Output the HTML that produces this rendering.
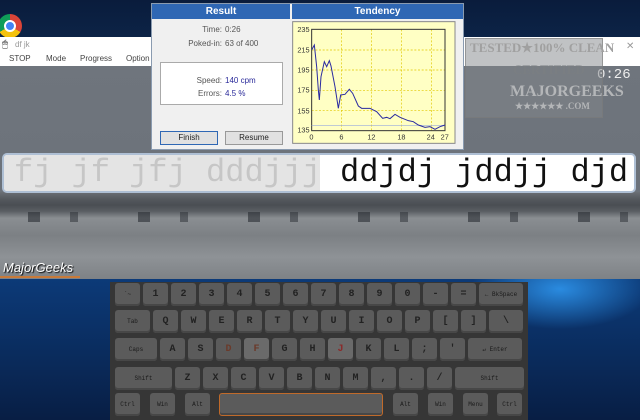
<!DOCTYPE html>
<html><head><meta charset="utf-8"><style>
*{margin:0;padding:0;box-sizing:border-box}
body{width:640px;height:420px;overflow:hidden;position:relative;background:#08193a;font-family:"Liberation Sans",sans-serif}
.abs{position:absolute}
#desk{left:0;top:0;width:640px;height:40px;background:linear-gradient(180deg,#0a1c3c,#0c2447)}
#bot{left:0;top:279px;width:640px;height:141px;background:radial-gradient(ellipse 90px 40px at 560px 10px,#2a8be0,transparent),linear-gradient(180deg,#0c3a78,#0a2a5a 60%,#081e44)}
#white{left:0;top:37px;width:640px;height:29px;background:#fff}
#app{left:0;top:66px;width:640px;height:213px;background:linear-gradient(180deg,#6f757d 0,#6c727a 60%,#7a7f85 100%)}
#land{left:0;top:192px;width:640px;height:87px;background:linear-gradient(180deg,#6a6f75 0,#55595e 8%,#4a4e53 15%,#5a5e63 22%,#8a8e92 30%,#7c8084 50%,#8e9296 75%,#7e8286 100%)}
.menu{top:54px;font-size:8px;color:#444}
#tbar{left:2px;top:153px;width:634px;height:40px;border:2px solid #aebfd4;border-radius:5px;background:#fff;overflow:hidden}
#tl{left:0;top:0;width:316px;height:36px;background:#e4e4e4}
.mono{font-family:"Liberation Mono",monospace;font-size:32px;top:-1px;white-space:pre}
#dlg{left:151px;top:3px;width:313px;height:147px;background:#f0f0f0;border:1px solid #8a9bb0}
.tt{top:0;height:15px;background:#2f67b4;color:#fff;font-size:10px;font-weight:bold;text-align:center;line-height:15px}
.lbl{font-size:8px;color:#555;text-align:right;width:60px}
.val{font-size:8px;color:#555}
.btn{font-size:8px;height:14px;border:1px solid #999;background:#e1e1e1;text-align:center;line-height:12px;color:#222}
#kb{left:110px;top:282px;width:418px;height:138px;background:#363636}
.row{position:absolute;left:5px;width:408px;display:flex;gap:3px}
.k{height:23px;background:#5b5b5b;border-radius:3px;box-shadow:inset 0 -2px 0 #474747;color:#222;font-family:"Liberation Mono",monospace;font-weight:bold;font-size:10px;display:flex;align-items:center;justify-content:center;flex:none}
.s{font-size:6px;font-weight:normal;color:#1a1a1a}
</style></head><body>
<div id="desk" class="abs"></div>
<div id="bot" class="abs"></div>
<div class="abs" style="left:-2px;top:14px;width:24px;height:24px;border-radius:50%;background:conic-gradient(#db4437 0 120deg,#f4c20d 0 240deg,#0f9d58 0)"></div>
<div class="abs" style="left:4px;top:20px;width:12px;height:12px;border-radius:50%;background:#4285f4;border:2px solid #fff"></div>
<div id="white" class="abs"></div>
<div class="abs" style="left:2px;top:39px;font-size:10px;color:#333">&#x1F5B1;</div>
<div class="abs" style="left:15px;top:40px;font-size:8px;color:#999">df jk</div>
<div class="abs menu" style="left:9px">STOP</div>
<div class="abs menu" style="left:46px">Mode</div>
<div class="abs menu" style="left:80px">Progress</div>
<div class="abs menu" style="left:126px">Option</div>
<div class="abs" style="left:626px;top:41px;font-size:10px;color:#999">✕</div>
<div id="app" class="abs"></div>
<div id="land" class="abs"></div>
<div class="abs" style="left:0;top:212px;width:640px;height:10px;background:repeating-linear-gradient(90deg,transparent 0 28px,rgba(40,44,50,.6) 28px 40px,transparent 40px 70px,rgba(40,44,50,.5) 70px 78px,transparent 78px 110px)"></div>
<div class="abs" style="left:597px;top:67px;font-family:'Liberation Mono',monospace;font-size:14px;color:#eee">0:26</div>
<div class="abs" style="left:3px;top:260px;font-size:13px;color:#fff;font-style:italic;text-shadow:1px 1px 1px #000">MajorGeeks</div>
<div class="abs" style="left:0;top:276px;width:80px;height:2px;background:#c87a3a"></div>
<div id="tbar" class="abs"><div id="tl" class="abs"></div>
<div class="abs mono" style="left:10px;color:#c6c6c6">fj jf jfj dddjjj</div>
<div class="abs mono" style="left:336px;color:#111">ddjdj jddjj djd</div></div>
<div class="abs" style="left:465px;top:38px;width:138px;height:80px;background:rgba(130,134,138,.5);border:1px solid rgba(120,120,120,.6)"></div>
<div class="abs" style="left:470px;top:40px;font-family:'Liberation Serif',serif;font-weight:bold;font-size:13px;color:#a0a0a0">TESTED★100% CLEAN</div>
<div class="abs" style="left:513px;top:62px;font-family:'Liberation Serif',serif;font-weight:bold;font-size:13px;color:#7a7e82">CERTIFIED</div>
<div class="abs" style="left:510px;top:83px;font-family:'Liberation Serif',serif;font-weight:bold;font-size:16px;color:#b4b6b8">MAJORGEEKS</div>
<div class="abs" style="left:515px;top:101px;font-family:'Liberation Serif',serif;font-weight:bold;font-size:9px;color:#b4b6b8">★★★★★★ .COM</div>
<div id="dlg" class="abs">
<div class="abs tt" style="left:0;width:138px">Result</div>
<div class="abs tt" style="left:140px;width:171px">Tendency</div>
<div class="abs lbl" style="left:10px;top:21px">Time:</div><div class="abs val" style="left:73px;top:21px">0:26</div>
<div class="abs lbl" style="left:10px;top:35px">Poked-in:</div><div class="abs val" style="left:73px;top:35px">63 of 400</div>
<div class="abs" style="left:8px;top:58px;width:123px;height:43px;background:#fff;border:1px solid #aaa"></div>
<div class="abs lbl" style="left:10px;top:72px">Speed:</div><div class="abs val" style="left:73px;top:72px;color:#2a2a9a">140 cpm</div>
<div class="abs lbl" style="left:10px;top:85px">Errors:</div><div class="abs val" style="left:73px;top:85px;color:#2a2a9a">4.5 %</div>
<div class="abs btn" style="left:8px;top:127px;width:58px;border:1px solid #2f67b4">Finish</div>
<div class="abs btn" style="left:73px;top:127px;width:58px">Resume</div>
</div>
<svg class="abs" style="left:292px;top:20px" width="168" height="126" viewBox="6 60 504 378">
<rect x="8" y="65" width="487" height="365" fill="#ffffc4" stroke="#888" stroke-width="3"/>
<g stroke="#e0c800" stroke-width="2" stroke-dasharray="6 5">
<line x1="155" y1="88" x2="155" y2="392"/><line x1="245" y1="88" x2="245" y2="392"/><line x1="335" y1="88" x2="335" y2="392"/><line x1="425" y1="88" x2="425" y2="392"/>
<line x1="65" y1="150" x2="465" y2="150"/><line x1="65" y1="210" x2="465" y2="210"/><line x1="65" y1="271" x2="465" y2="271"/><line x1="65" y1="332" x2="465" y2="332"/>
</g>
<rect x="65" y="88" width="400" height="304" fill="none" stroke="#333" stroke-width="3"/>
<line x1="65" y1="376" x2="465" y2="376" stroke="#9ad" stroke-width="2"/>
<polyline fill="none" stroke="#2a2aa0" stroke-width="3" points="65,150 73,135 80,200 85,270 88,300 93,230 103,185 110,200 118,182 123,198 135,260 145,325 152,285 165,283 178,268 188,280 205,318 215,325 240,325 260,335 278,355 290,352 300,356 315,343 330,352 355,362 370,365 385,375 405,382 420,380 435,388 450,380 465,375"/>
<g font-size="22" fill="#333" font-family="Liberation Sans">
<text x="22" y="96">235</text><text x="22" y="157">215</text><text x="22" y="218">195</text><text x="22" y="278">175</text><text x="22" y="340">155</text><text x="22" y="398">135</text>
<text x="58" y="418">0</text><text x="148" y="418">6</text><text x="232" y="418">12</text><text x="322" y="418">18</text><text x="410" y="418">24</text><text x="452" y="418">27</text></g>
</svg>
<div id="kb" class="abs">
<div class="row" style="top:1px">
<div class="k" style="width:25px"><span class="s">`~</span></div><div class="k" style="width:25px">1</div><div class="k" style="width:25px">2</div><div class="k" style="width:25px">3</div><div class="k" style="width:25px">4</div><div class="k" style="width:25px">5</div><div class="k" style="width:25px">6</div><div class="k" style="width:25px">7</div><div class="k" style="width:25px">8</div><div class="k" style="width:25px">9</div><div class="k" style="width:25px">0</div><div class="k" style="width:25px">-</div><div class="k" style="width:25px">=</div><div class="k" style="width:44px"><span class="s">← BkSpace</span></div></div>
<div class="row" style="top:28px">
<div class="k" style="width:35px"><span class="s">Tab</span></div><div class="k" style="width:25px">Q</div><div class="k" style="width:25px">W</div><div class="k" style="width:25px">E</div><div class="k" style="width:25px">R</div><div class="k" style="width:25px">T</div><div class="k" style="width:25px">Y</div><div class="k" style="width:25px">U</div><div class="k" style="width:25px">I</div><div class="k" style="width:25px">O</div><div class="k" style="width:25px">P</div><div class="k" style="width:25px">[</div><div class="k" style="width:25px">]</div><div class="k" style="width:34px">\</div></div>
<div class="row" style="top:56px">
<div class="k" style="width:42px"><span class="s">Caps</span></div><div class="k" style="width:25px">A</div><div class="k" style="width:25px">S</div><div class="k" style="width:25px;color:#6a3a2a">D</div><div class="k" style="width:25px;color:#6a3a2a;background:#6a6a6a">F</div><div class="k" style="width:25px">G</div><div class="k" style="width:25px">H</div><div class="k" style="width:25px;color:#8a2a2a;background:#6a6a6a">J</div><div class="k" style="width:25px">K</div><div class="k" style="width:25px">L</div><div class="k" style="width:25px">;</div><div class="k" style="width:25px">'</div><div class="k" style="width:54px"><span class="s">↵ Enter</span></div></div>
<div class="row" style="top:85px">
<div class="k" style="width:57px"><span class="s">Shift</span></div><div class="k" style="width:25px">Z</div><div class="k" style="width:25px">X</div><div class="k" style="width:25px">C</div><div class="k" style="width:25px">V</div><div class="k" style="width:25px">B</div><div class="k" style="width:25px">N</div><div class="k" style="width:25px">M</div><div class="k" style="width:25px">,</div><div class="k" style="width:25px">.</div><div class="k" style="width:25px">/</div><div class="k" style="width:69px"><span class="s">Shift</span></div></div>
<div class="row" style="top:111px;gap:0">
<div class="k" style="width:25px"><span class="s">Ctrl</span></div><div class="k" style="width:25px;margin-left:10px"><span class="s">Win</span></div><div class="k" style="width:25px;margin-left:10px"><span class="s">Alt</span></div><div class="k" style="width:164px;margin-left:9px;border:1px solid #c06a2a"></div><div class="k" style="width:25px;margin-left:10px"><span class="s">Alt</span></div><div class="k" style="width:25px;margin-left:10px"><span class="s">Win</span></div><div class="k" style="width:25px;margin-left:10px"><span class="s">Menu</span></div><div class="k" style="width:25px;margin-left:9px"><span class="s">Ctrl</span></div></div>
</div>
</body></html>
